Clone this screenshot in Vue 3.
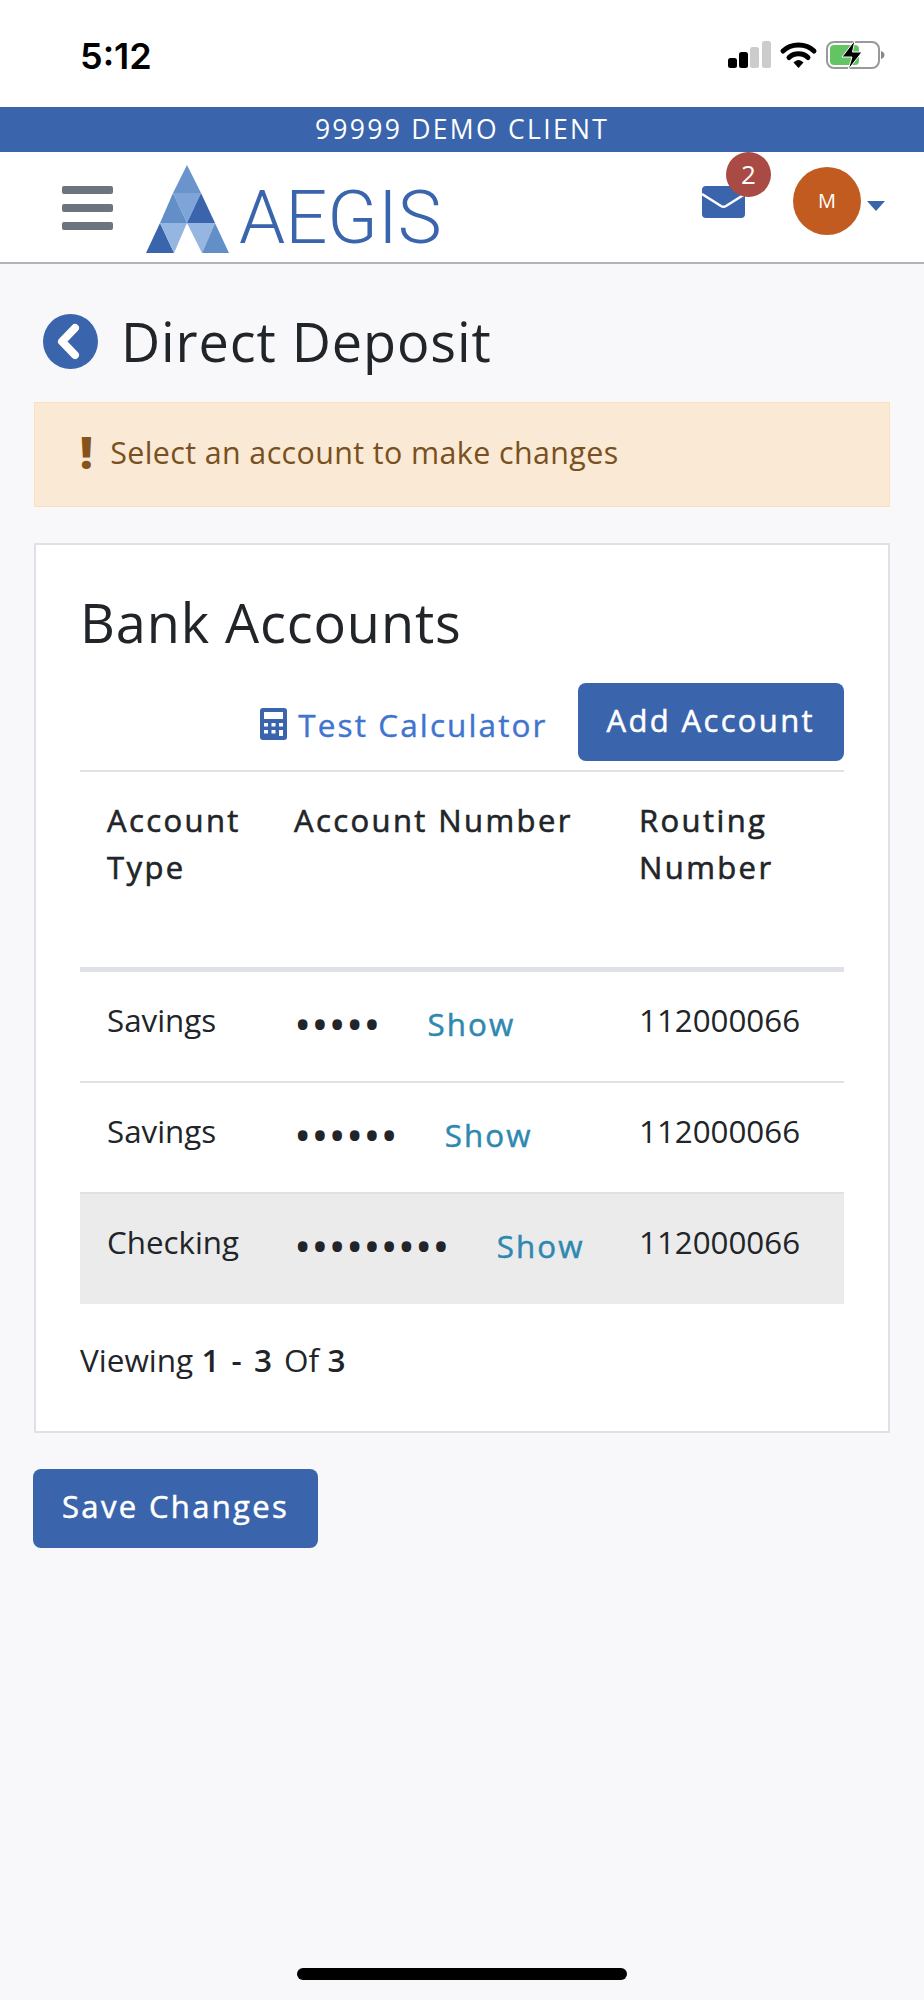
<script setup>
const rows = [
  { type: 'Savings', dots: '•••••', routing: '112000066', active: false },
  { type: 'Savings', dots: '••••••', routing: '112000066', active: false },
  { type: 'Checking', dots: '•••••••••', routing: '112000066', active: true },
]
</script>

<template>
  <div class="page">
    <div class="status">
      <span class="time">5:12</span>
      <svg class="status-icons" width="160" height="30" viewBox="0 0 160 30">
        <rect x="2" y="17" width="9" height="10" rx="2.500" fill="#000" />
        <rect x="13" y="11" width="9" height="16" rx="2.500" fill="#000" />
        <rect x="24" y="6" width="9" height="21" rx="2.500" fill="#ccc" />
        <rect x="36" y="0" width="9" height="27" rx="2.500" fill="#ccc" />
        <path d="M57 10C65 2 80 2 88 10" fill="none" stroke="#000" stroke-width="5" stroke-linecap="round" />
        <path d="M63 16.500C68 11.500 77 11.500 82 16.500" fill="none" stroke="#000" stroke-width="5" stroke-linecap="round" />
        <path d="M67.500 21.500C71 18 74 18 77.500 21.500L72.500 27Z" fill="#000" />
        <rect x="101" y="1" width="52" height="26" rx="7" fill="#fff" stroke="#999" stroke-width="2" />
        <rect x="104" y="4" width="29" height="20" rx="4" fill="#62c462" />
        <path d="M155 10c2.500 .8 3.500 2.500 3.500 4s-1 3.200-3.500 4z" fill="#888" />
        <path d="M129 -1L116 16H126L122 29L136 11H126.500Z" fill="#000" stroke="#fff" stroke-width="1" />
      </svg>
    </div>
    <div class="client">99999 DEMO CLIENT</div>
    <header class="nav">
      <div class="burger"><i></i><i></i><i></i></div>
      <svg class="logo-mark" width="84" height="88" viewBox="147 165 84 88">
        <polygon points="188,165 174,193 202,193" fill="#6a94cb" />
        <polygon points="174,193 202,193 188,223" fill="#7fa5d8" />
        <polygon points="174,193 161,223 188,223" fill="#628fc8" />
        <polygon points="202,193 188,223 216,223" fill="#3a64ac" />
        <polygon points="161,223 147,253 175,253" fill="#3a64ac" />
        <polygon points="161,223 188,223 175,253" fill="#94b6e0" />
        <polygon points="188,223 216,223 203,253" fill="#94b6e0" />
        <polygon points="216,223 203,253 230,253" fill="#628fc8" />
      </svg>
      <span class="brand">AEGIS</span>
      <div class="spacer"></div>
      <div class="mail">
        <svg width="43" height="32" viewBox="0 0 43 32">
          <rect width="43" height="32" rx="4" fill="#3a64ac" />
          <path d="M0 8L19 20Q21.500 21.500 24 20L43 8" fill="none" stroke="#fff" stroke-width="2.500" />
        </svg>
        <span class="badge">2</span>
      </div>
      <div class="avatar">M</div>
      <span class="caret"></span>
    </header>

    <main class="content">
      <div class="title-row">
        <svg class="back" width="55" height="55" viewBox="0 0 55 55">
          <circle cx="27.500" cy="27.500" r="27.500" fill="#3a64ac" />
          <path d="M32 14L19 27.500L32 41" fill="none" stroke="#fff" stroke-width="8" stroke-linecap="round" stroke-linejoin="round" />
        </svg>
        <h1>Direct Deposit</h1>
      </div>

      <div class="alert">
        <span class="bang">!</span>
        <span class="alert-text">Select an account to make changes</span>
      </div>

      <section class="card">
        <h2>Bank Accounts</h2>
        <div class="actions">
          <a class="calc">
            <svg width="27" height="32" viewBox="0 0 27 32">
              <rect width="27" height="32" rx="3" fill="#3a64ac" />
              <rect x="4" y="4" width="19" height="7" fill="#fff" />
              <g fill="#fff">
                <rect x="4" y="15" width="4" height="3.500" /><rect x="11.500" y="15" width="4" height="3.500" /><rect x="19" y="15" width="4" height="3.500" />
                <rect x="4" y="22" width="4" height="3.500" /><rect x="11.500" y="22" width="4" height="3.500" /><rect x="19" y="22" width="4" height="6" />
              </g>
            </svg>
            <span>Test Calculator</span>
          </a>
          <button class="btn">Add Account</button>
        </div>

        <div class="table">
          <div class="thead">
            <div>Account<br />Type</div>
            <div>Account Number</div>
            <div>Routing<br />Number</div>
          </div>
          <div v-for="(r, i) in rows" :key="i" class="trow" :class="{ active: r.active }">
            <div>{{ r.type }}</div>
            <div class="acct"><span class="dots">{{ r.dots }}</span><a class="show">Show</a></div>
            <div>{{ r.routing }}</div>
          </div>
        </div>

        <p class="viewing">Viewing <b>1</b> <b>-</b> <b>3</b> Of <b>3</b></p>
      </section>

      <button class="btn save">Save Changes</button>
    </main>

    <div class="home"></div>
  </div>
</template>

<style>
html, body { margin: 0; background: #f8f8fa; }
</style>

<style scoped>
* { box-sizing: border-box; }
.page {
  width: 924px;
  height: 2000px;
  position: relative;
  background: #f8f8fa;
  font-family: "Open Sans", sans-serif;
  color: #212529;
  overflow: hidden;
}
.status {
  height: 107px;
  background: #fff;
  display: flex;
  align-items: flex-start;
  justify-content: space-between;
  padding: 41px 38px 0 80px;
}
.time {
  font-family: Inter, sans-serif;
  font-weight: 600;
  font-size: 36px;
  line-height: 30px;
  color: #000;
}
.status-icons { display: block; }
.client {
  height: 45px;
  background: #3a64ac;
  color: #fff;
  font-size: 26.500px;
  line-height: 45px;
  letter-spacing: 2.300px;
  text-align: center;
}
.nav {
  height: 112px;
  background: #fff;
  border-bottom: 2px solid #b3b3b3;
  display: flex;
  align-items: flex-start;
  padding: 0 39px 0 62px;
}
.burger { width: 51px; margin-top: 34px; display: flex; flex-direction: column; gap: 10px; }
.burger i { display: block; height: 8px; border-radius: 2px; background: #6c757d; }
.logo-mark { margin: 13px 0 0 33px; display: block; }
.brand {
  font-family: Roboto, sans-serif;
  font-weight: 300;
  font-size: 74px;
  line-height: 88px;
  color: #3a64ac;
  margin: 22px 0 0 9px;
}
.spacer { flex: 1; }
.mail { position: relative; width: 43px; height: 32px; margin-top: 34px; }
.mail svg { display: block; }
.badge {
  position: absolute;
  left: 24px;
  top: -34px;
  width: 45px;
  height: 45px;
  border-radius: 50%;
  background: #a94a44;
  color: #fff;
  font-size: 26px;
  line-height: 45px;
  text-align: center;
}
.avatar {
  width: 68px;
  height: 68px;
  margin: 15px 0 0 48px;
  border-radius: 50%;
  background: #c25b20;
  color: #fff;
  font-size: 20px;
  line-height: 68px;
  text-align: center;
}
.caret {
  width: 0;
  height: 0;
  margin: 49px 0 0 6px;
  border-left: 9px solid transparent;
  border-right: 9px solid transparent;
  border-top: 10px solid #3a64ac;
}
.content { padding: 0 34px; }
.title-row { display: flex; align-items: center; height: 138px; padding: 16px 0 0 9px; gap: 23px; }
.back { display: block; flex: none; }
h1 { margin: 0; font-weight: 400; font-size: 54px; line-height: 70px; letter-spacing: .9px; }
.alert {
  height: 105px;
  background: #f9e9d5;
  border: 1px solid #fae0bc;
  color: #7a5020;
  font-size: 30.400px;
  letter-spacing: .4px;
  display: flex;
  align-items: center;
  padding: 0 0 0 45px;
  gap: 17px;
}
.alert-text { margin-top: -4px; }
.bang { font-weight: 800; font-size: 44px; line-height: 44px; color: #85541c; margin-top: -6px; }
.card {
  margin-top: 36px;
  height: 890px;
  background: #fff;
  border: 2px solid #dee2e6;
  padding: 0 44px;
}
h2 { margin: 0; padding-top: 42px; font-weight: 400; font-size: 54px; line-height: 70px; letter-spacing: .9px; }
.actions { display: flex; justify-content: flex-end; align-items: center; gap: 30px; margin-top: 26px; }
.calc { display: flex; align-items: center; gap: 11px; color: #3f74cf; font-size: 31.500px; font-weight: 400; -webkit-text-stroke: .4px #3f74cf; letter-spacing: 2.100px; margin-top: 4px; }
.calc svg { display: block; }
.btn {
  border: 0;
  background: #3a64ac;
  color: #fff;
  font-family: inherit;
  font-size: 31px;
  font-weight: 400;
  -webkit-text-stroke: .5px #fff;
  letter-spacing: 2.350px;
  border-radius: 8px;
  height: 78px;
  padding: 0 29px 4px;
}
.table { margin-top: 9px; border-top: 2px solid #dee2e6; }
.thead, .trow { display: grid; grid-template-columns: 187px 345px 232px; }
.thead > div, .trow > div { padding-left: 27px; }
.thead {
  height: 200px;
  border-bottom: 5px solid #dee2e6;
  font-size: 31px;
  font-weight: 400;
  -webkit-text-stroke: .6px #212529;
  line-height: 47px;
  letter-spacing: 2.400px;
  padding-top: 25px;
}
.trow {
  height: 111px;
  border-bottom: 2px solid #dee2e6;
  font-size: 31.300px;
  line-height: 44px;
  padding-top: 26px;
}
.trow:last-child { border-bottom: 0; height: 110px; }
.trow.active { background: #ebebeb; }
.acct { display: flex; align-items: flex-start; gap: 50px; }
.dots { font-size: 46px; line-height: 44px; letter-spacing: 0; margin-top: 3px; margin-right: -3px; }
.show { color: #2e88b0; font-weight: 400; -webkit-text-stroke: .5px #2e88b0; letter-spacing: 2.100px; margin-top: 4px; }
.viewing { margin: 34px 0 0; font-size: 31.500px; line-height: 44px; }
.viewing b { font-weight: 600; letter-spacing: 4px; }
.save { margin: 36px 0 0 -1px; height: 79px; padding: 0 29px 5px; }
.home {
  position: absolute;
  left: 297px;
  top: 1968px;
  width: 330px;
  height: 12px;
  border-radius: 6px;
  background: #000;
}
</style>
